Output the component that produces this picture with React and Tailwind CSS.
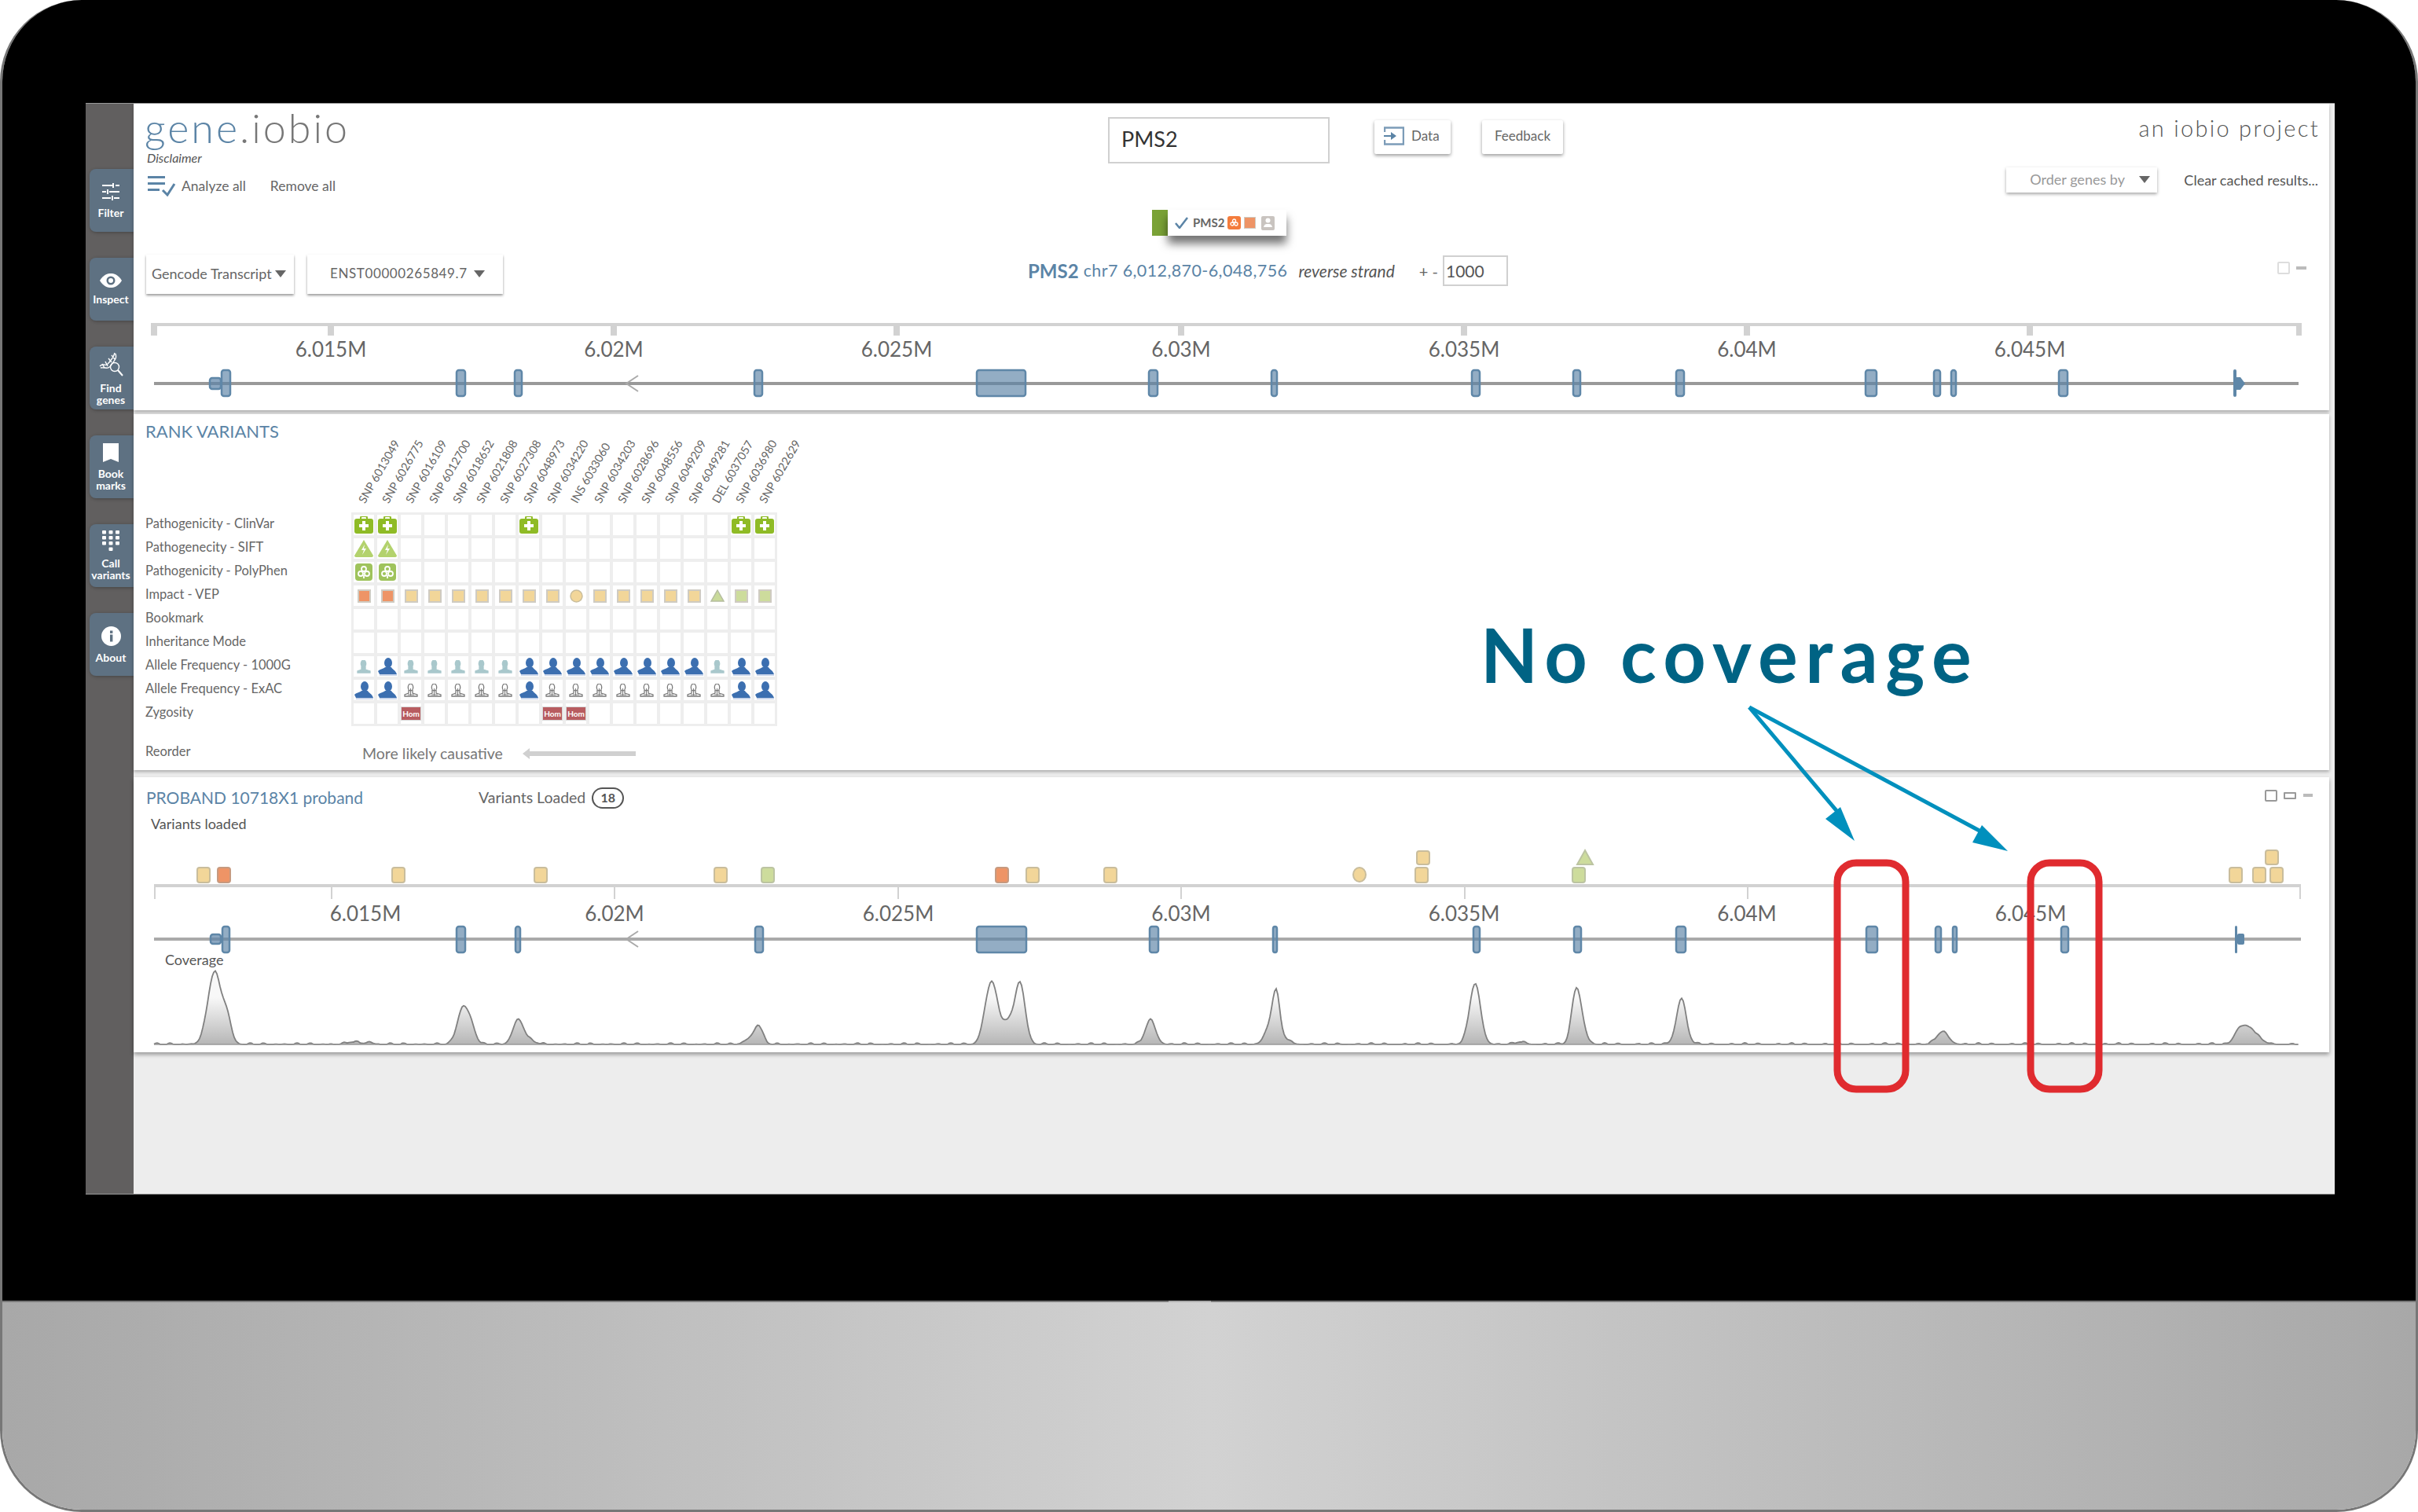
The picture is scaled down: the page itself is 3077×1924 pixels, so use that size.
import React from "react";

const FONT = { fontFamily: "Lato, 'Open Sans', sans-serif" };

const EXONS_TOP = [[281, 294], [580, 593], [654, 665], [959, 971], [1242, 1306], [1461, 1474], [1617, 1626], [1872, 1884], [2001, 2012], [2132, 2144], [2373, 2389], [2460, 2470], [2482, 2490], [2619, 2632]];
const EXONS_BOTTOM = [[282, 293], [580, 593], [655, 663], [960, 972], [1242, 1307], [1462, 1475], [1619, 1626], [1874, 1884], [2002, 2013], [2132, 2146], [2374, 2390], [2462, 2471], [2484, 2491], [2622, 2633]];
const TICKS = [[421, "6.015M"], [781, "6.02M"], [1141, "6.025M"], [1503, "6.03M"], [1863, "6.035M"], [2223, "6.04M"], [2583, "6.045M"]];
const BOTTOM_TICKS = [[422, "6.015M", 465], [782, "6.02M", 782], [1143, "6.025M", 1143], [1503, "6.03M", 1503], [1864, "6.035M", 1863], [2224, "6.04M", 2223], [2584, "6.045M", 2584]];

const COLS = ["SNP 6013049", "SNP 6026775", "SNP 6016109", "SNP 6012700", "SNP 6018652", "SNP 6021808", "SNP 6027308", "SNP 6048973", "SNP 6034220", "INS 6033060", "SNP 6034203", "SNP 6028696", "SNP 6048556", "SNP 6049209", "SNP 6049281", "DEL 6037057", "SNP 6036980", "SNP 6022629"];
const ROW_LABELS = ["Pathogenicity - ClinVar", "Pathogenecity - SIFT", "Pathogenicity - PolyPhen", "Impact - VEP", "Bookmark", "Inheritance Mode", "Allele Frequency - 1000G", "Allele Frequency - ExAC", "Zygosity"];

const PEAKS = [
  [273, 92, 8.5], [289, 30, 5.5], [589, 46, 7], [600, 18, 5.5], [659, 29, 6.5], [670, 6, 9], [965, 24, 5.5], [952, 6, 6],
  [450, 3, 8], [470, 3, 4], [1263, 70, 6.5], [1298, 77, 6.5], [1281, 28, 8], [1254, 24, 6], [1464, 31, 6.5],
  [1624, 50, 4.5], [1617, 24, 7], [1632, 8, 8], [1877, 77, 7], [1935, 3, 6], [2005, 58, 5.5], [2012, 25, 6],
  [2140, 50, 5.5], [2134, 10, 6], [2147, 5, 6], [2472, 16, 7.5], [2850, 20, 6.5], [2863, 18, 6.5], [2875, 6, 7],
];

function coveragePath() {
  const base = 1328;
  let d = "";
  for (let x = 196; x <= 2925; x += 2) {
    let h = Math.max(0, Math.sin(x * 0.37) * Math.sin(x * 0.053) * 2);
    for (const [c, a, s] of PEAKS) h += a * Math.exp(-((x - c) ** 2) / (2 * s * s));
    d += `${d ? "L" : "M"}${x} ${(base - h).toFixed(1)}`;
  }
  return d;
}
const COV = coveragePath();

function Caret({ className = "" }) {
  return (
    <svg width="14" height="9" viewBox="0 0 14 9" className={className}>
      <path d="M0 0H14L7 9Z" fill="#666" />
    </svg>
  );
}

function SideButton({ icon, lines }) {
  return (
    <div className="w-full h-[80px] pr-[2px] bg-[#5e7182] rounded-l-[8px] shadow-[1px_1px_4px_rgba(0,0,0,0.3)] flex flex-col items-center justify-center text-white text-[14px] font-bold leading-[15px] text-center">
      <div className="mb-[7px] flex items-center justify-center">{icon}</div>
      {lines.map((l) => (
        <div key={l}>{l}</div>
      ))}
    </div>
  );
}

function Sidebar() {
  const ic = { fill: "none", stroke: "white" };
  return (
    <div className="w-[61px] shrink-0 bg-[#615f5f] pl-[5px] pt-[83px] flex flex-col gap-[33px]">
      <SideButton
        lines={["Filter"]}
        icon={
          <svg width="24" height="24" viewBox="0 0 24 24" {...ic} strokeWidth="2">
            <path d="M1 4H14M18 4H23M15 1V7M1 12H6M10 12H23M8 9V15M1 20H12M16 20H23M14 17V23" />
          </svg>
        }
      />
      <SideButton
        lines={["Inspect"]}
        icon={
          <svg width="28" height="18" viewBox="0 0 28 18">
            <path d="M0 9C5 1 10 0 14 0S23 1 28 9C23 17 18 18 14 18S5 17 0 9Z" fill="white" />
            <circle cx="14" cy="9" r="5.5" fill="#5e7182" />
            <circle cx="14" cy="9" r="3" fill="white" />
          </svg>
        }
      />
      <SideButton
        lines={["Find", "genes"]}
        icon={
          <svg width="32" height="32" viewBox="0 0 32 32" {...ic} strokeWidth="1.4">
            <path d="M2 19C8 13 8 22 14 14S20 7 21 2M3 21C9 20 13 24 17 17S24 10 22 3M5 16L8 21M9 13L12 19M13 9L17 14M17 5L21 10" />
            <circle cx="21" cy="20" r="5.5" />
            <path d="M25 24L31 31" strokeWidth="2" />
          </svg>
        }
      />
      <SideButton
        lines={["Book", "marks"]}
        icon={
          <svg width="20" height="24" viewBox="0 0 20 24">
            <path d="M0 0H20V24L10 20L0 24Z" fill="white" />
          </svg>
        }
      />
      <SideButton
        lines={["Call", "variants"]}
        icon={
          <svg width="22" height="27" viewBox="0 0 22 27" fill="white">
            {[0, 1, 2].flatMap((r) => [0, 1, 2].map((c) => <rect key={`${r}${c}`} x={c * 8.5} y={r * 7} width="5" height="4.5" rx="1" />))}
            <rect x="8.5" y="21.5" width="5" height="4.5" rx="1" />
          </svg>
        }
      />
      <SideButton
        lines={["About"]}
        icon={
          <svg width="25" height="25" viewBox="0 0 25 25">
            <circle cx="12.5" cy="12.5" r="12.5" fill="white" />
            <rect x="11" y="10.5" width="3.4" height="9" fill="#5e7182" />
            <rect x="11" y="5.5" width="3.4" height="3.4" fill="#5e7182" />
          </svg>
        }
      />
    </div>
  );
}

function Exon({ a, b, y1, y2 }) {
  return <rect x={a + 1} y={y1 + 1} width={b - a - 2} height={y2 - y1 - 2} rx="3" fill="#5b82a6" fillOpacity="0.66" stroke="#5f87a8" strokeWidth="2.5" />;
}

function Shield({ children }) {
  return <div className="bg-white w-[26px] h-[26px] flex items-center justify-center overflow-visible">{children}</div>;
}

function ClinVar() {
  return (
    <svg width="24" height="22" viewBox="0 0 24 22">
      <path d="M8 4V2C8 1 9 0 10 0H14C15 0 16 1 16 2V4" fill="none" stroke="#8fbb26" strokeWidth="2" />
      <rect y="3" width="24" height="19" rx="3" fill="#8fbb26" />
      <path d="M10 7H14V11H18V15H14V19H10V15H6V11H10Z" fill="white" transform="translate(0 -1)" />
    </svg>
  );
}
function Sift() {
  return (
    <svg width="24" height="22" viewBox="0 0 24 22">
      <path d="M12 0L24 20C24 21 23 22 22 22H2C1 22 0 21 0 20Z" fill="#b3d26d" />
      <path d="M13 6L9 13H12L10 19L15 11H12Z" fill="white" />
    </svg>
  );
}
function Poly() {
  return (
    <svg width="22" height="22" viewBox="0 0 22 22">
      <rect width="22" height="22" rx="4" fill="#9fc35c" />
      <g fill="none" stroke="white" strokeWidth="1.8">
        <circle cx="11" cy="7" r="3" />
        <circle cx="7" cy="13" r="3" />
        <circle cx="15" cy="13" r="3" />
        <path d="M11 15V19" />
      </g>
    </svg>
  );
}
function Vep({ kind }) {
  if (kind === "circle")
    return (
      <svg width="17" height="17" viewBox="0 0 17 17">
        <ellipse cx="8.5" cy="8.5" rx="7.5" ry="7.5" fill="#f2d699" stroke="#c9bd9c" strokeWidth="1.5" />
      </svg>
    );
  if (kind === "tri")
    return (
      <svg width="18" height="16" viewBox="0 0 18 16">
        <path d="M9 1L17 15H1Z" fill="#c9da9a" stroke="#b5bda0" strokeWidth="1.5" />
      </svg>
    );
  const fill = kind === "o" ? "bg-[#ee9466]" : kind === "g" ? "bg-[#cddc9c]" : "bg-[#f2d699]";
  return <div className={`w-[17px] h-[17px] border-2 border-[#cfcbc2] ${fill}`} />;
}
function Person({ dark, hollow }) {
  if (dark)
    return (
      <svg width="24" height="23" viewBox="0 0 24 23">
        <ellipse cx="13" cy="6.5" rx="5" ry="6.5" fill="#3c6fb0" />
        <path d="M0 17C3 14 7 14 9 12H17C18 15 22 15 24 21H2Z" fill="#3c6fb0" />
        <path d="M2 21H24V23H2Z" fill="#c9d5ea" />
      </svg>
    );
  const col = hollow ? "#7a7a7a" : "#a9c8cc";
  return (
    <svg width="18" height="17" viewBox="0 0 18 17">
      <ellipse cx="8.5" cy="4.5" rx="3.2" ry="4.5" fill={hollow ? "none" : col} stroke={col} strokeWidth="1.3" />
      <path d="M6 8V12L1 14V16H17V14L11 12V8" fill={hollow ? "none" : col} stroke={col} strokeWidth="1.3" />
      {hollow && <path d="M8.5 6V15M5 14H13" fill="none" stroke={col} strokeWidth="1" />}
    </svg>
  );
}
function Hom() {
  return <div className="w-[26px] h-[18px] bg-[#b85c60] border border-[#d9d9d9] text-white text-[10px] font-bold leading-[16px] text-center">Hom</div>;
}

const LIGHT = [0, 2, 3, 4, 5, 6, 15];
const EXAC = [0, 1, 7, 16, 17];
const HOM = [2, 8, 9];
const CLIN = [0, 1, 7, 16, 17];

function cellContent(r, c) {
  if (r === 0) return CLIN.includes(c) ? <ClinVar /> : null;
  if (r === 1) return c < 2 ? <Sift /> : null;
  if (r === 2) return c < 2 ? <Poly /> : null;
  if (r === 3) {
    if (c < 2) return <Vep kind="o" />;
    if (c === 9) return <Vep kind="circle" />;
    if (c === 15) return <Vep kind="tri" />;
    if (c > 15) return <Vep kind="g" />;
    return <Vep kind="y" />;
  }
  if (r === 6) return LIGHT.includes(c) ? <Person /> : <Person dark />;
  if (r === 7) return EXAC.includes(c) ? <Person dark /> : <Person hollow />;
  if (r === 8) return HOM.includes(c) ? <Hom /> : null;
  return null;
}

function Header() {
  return (
    <div className="flex h-[190px]">
      <div className="w-[1240px] pl-[14px] shrink-0">
        <div className="text-[52px] leading-[54px] font-light tracking-[3px] pt-[3px] h-[58px]">
          <span className="text-[#5b84a6]">gene</span>
          <span className="text-[#777]">.iobio</span>
        </div>
        <div className="pl-[3px] text-[16px] italic text-[#555] leading-[20px] mt-[1px]">Disclaimer</div>
        <div className="flex items-center mt-[13px] pl-[4px] text-[17.5px] text-[#666]">
          <svg width="36" height="26" viewBox="0 0 36 26" className="mr-[7px]">
            <path d="M0 1.5H22M0 9.5H22M0 17.5H15" stroke="#5b84a6" strokeWidth="3" />
            <path d="M19 18L25 24L34 10" fill="none" stroke="#5b84a6" strokeWidth="3" />
          </svg>
          <span>Analyze all</span>
          <span className="ml-[31px]">Remove all</span>
        </div>
      </div>
      <div className="w-[1090px] shrink-0 pt-[17px]">
        <div className="flex items-start">
          <div className="w-[282px] h-[59px] border-2 border-[#d0d0d0] pl-[15px] text-[27px] leading-[52px] text-[#333]">PMS2</div>
          <div className="ml-[57px] mt-[4px] w-[97px] h-[43px] pb-[3px] bg-white rounded-[2px] shadow-[0_2px_4px_rgba(0,0,0,0.4)] flex items-center pl-[12px] text-[17px] text-[#666]">
            <svg width="26" height="24" viewBox="0 0 26 24" className="mr-[9px]">
              <path d="M1 7V1.5H25V22.5H1V17" fill="none" stroke="#7c9cb8" strokeWidth="2.5" />
              <path d="M0 11H9V7L16 12L9 17V13H0Z" fill="#5b84a6" />
            </svg>
            Data
          </div>
          <div className="ml-[40px] mt-[4px] w-[103px] h-[43px] pb-[3px] bg-white rounded-[2px] shadow-[0_2px_4px_rgba(0,0,0,0.4)] flex items-center justify-center text-[17px] text-[#666]">Feedback</div>
        </div>
        <div className="ml-[56px] mt-[59px] flex h-[33px] w-[171px]">
          <div className="w-[20px] bg-[#7aa236]" />
          <div className="w-[151px] bg-white shadow-[0_10px_12px_rgba(0,0,0,0.55)] flex items-center pl-[9px] text-[15px] font-bold text-[#666]">
            <svg width="17" height="15" viewBox="0 0 17 15" className="mr-[6px]">
              <path d="M1 8L6 14L16 1" fill="none" stroke="#5b84a6" strokeWidth="2.5" />
            </svg>
            PMS2
            <div className="ml-[4px] w-[17px] h-[17px] rounded-[3px] bg-[#f47c3c] flex items-center justify-center">
              <svg width="11" height="11" viewBox="0 0 11 11" fill="none" stroke="white" strokeWidth="1.3">
                <circle cx="5.5" cy="3" r="2" />
                <circle cx="3" cy="7" r="2" />
                <circle cx="8" cy="7" r="2" />
              </svg>
            </div>
            <div className="ml-[4px] w-[15px] h-[15px] bg-[#ee9466] border border-[#cfcbc2]" />
            <div className="ml-[7px] w-[17px] h-[18px] rounded-[2px] bg-[#c9c4c0] flex items-center justify-center">
              <svg width="11" height="13" viewBox="0 0 11 13" fill="white">
                <circle cx="5.5" cy="3.5" r="3" />
                <path d="M0 12C1 8 3 8 5.5 8S10 8 11 12Z" />
              </svg>
            </div>
          </div>
        </div>
      </div>
      <div className="flex-1 flex flex-col items-end pr-[12px] pt-[14px]">
        <div className="text-[29px] leading-[34px] font-light tracking-[2.3px] text-[#555]">an iobio project</div>
        <div className="flex items-center mt-[33px]">
          <div className="w-[192px] h-[32px] pb-[2px] bg-white shadow-[0_2px_4px_rgba(0,0,0,0.35)] flex items-center pl-[30px] text-[18px] text-[#999]">
            Order genes by
            <Caret className="ml-[18px]" />
          </div>
          <div className="ml-[34px] mr-[2px] text-[18px] text-[#555]">Clear cached results...</div>
        </div>
      </div>
    </div>
  );
}

function TitleRow() {
  return (
    <div className="flex items-center h-[54px]">
      <div className="ml-[16px] w-[188px] h-[50px] pb-[2px] bg-white shadow-[0_2px_3px_rgba(0,0,0,0.4)] flex items-center pl-[7px] text-[18px] text-[#666]">
        Gencode Transcript
        <Caret className="ml-[4px]" />
      </div>
      <div className="ml-[17px] w-[249px] h-[50px] pb-[2px] bg-white shadow-[0_2px_3px_rgba(0,0,0,0.4)] flex items-center pl-[29px] text-[17px] tracking-[0.6px] text-[#666]">
        ENST00000265849.7
        <Caret className="ml-[8px]" />
      </div>
      <div className="ml-[668px] flex items-center -mt-[9px]">
        <span className="text-[24px] font-bold text-[#5b84a6]">PMS2</span>
        <span className="ml-[6px] text-[21.5px] text-[#5b84a6] tracking-[0.4px]">chr7 6,012,870-6,048,756</span>
        <span className="ml-[14px] text-[21px] italic text-[#555]">reverse strand</span>
        <span className="ml-[31px] text-[20px] text-[#666]">+ -</span>
        <div className="ml-[6px] w-[83px] h-[39px] border-2 border-[#d0d0d0] pl-[2px] text-[21px] leading-[35px] text-[#555]">1000</div>
      </div>
      <div className="ml-auto mr-[29px] flex items-center -mt-[16px]">
        <div className="w-[16px] h-[16px] border-2 border-[#ddd] rounded-[2px]" />
        <div className="ml-[8px] w-[13px] h-[4px] bg-[#bbb]" />
      </div>
    </div>
  );
}

function TopTrack() {
  return (
    <svg width="2794" height="115" viewBox="170 405 2794 115" className="block mt-[31px]">
      <g fill="#d2d2d2">
        <rect x="192" y="409" width="2736" height="4" />
        <rect x="192" y="409" width="8" height="16" />
        <rect x="2922" y="409" width="7" height="16" />
        {TICKS.map(([x]) => (
          <rect key={x} x={x - 4} y="409" width="8" height="16" />
        ))}
      </g>
      {TICKS.map(([x, t]) => (
        <text key={t} x={x} y="452" textAnchor="middle" fontSize="26" fill="#666">
          {t}
        </text>
      ))}
      <path d="M196 486H2925" stroke="#999" strokeWidth="4" />
      <path d="M812 476L797 486L812 496" fill="none" stroke="#aaa" strokeWidth="2" />
      <rect x="267" y="479" width="14" height="14" rx="3" fill="#5b82a6" fillOpacity="0.7" stroke="#5f87a8" strokeWidth="2.5" />
      {EXONS_TOP.map(([a, b]) => (
        <Exon key={a} a={a} b={b} y1={468} y2={503} />
      ))}
      <rect x="2842" y="468" width="4" height="35" rx="2" fill="#5f87a8" />
      <path d="M2846 478H2851L2857 486L2851 494H2846Z" fill="#5f87a8" />
    </svg>
  );
}

function RankPanel() {
  return (
    <div className="mt-[5px] h-[453px] bg-white mr-[7px] shadow-[0_2px_4px_rgba(0,0,0,0.3)] pl-[15px] relative">
      <div className="pt-[8px] h-[40px] text-[22px] leading-[28px] text-[#5b84a6]">RANK VARIANTS</div>
      <div className="flex h-[85px] ml-[263px]">
        {COLS.map((c) => (
          <div key={c} className="relative w-[30px] h-full shrink-0">
            <div className="absolute left-[19px] bottom-[9px] origin-bottom-left rotate-[-60deg] whitespace-nowrap text-[14.5px] leading-[16px] text-[#666]">{c}</div>
          </div>
        ))}
      </div>
      <div className="flex pl-[2px]">
        <div className="w-[260px] shrink-0 -mt-[1px] -ml-[2px] mr-[2px]">
          {ROW_LABELS.map((l) => (
            <div key={l} className="h-[30px] flex items-center text-[16.5px] text-[#666]">
              {l}
            </div>
          ))}
        </div>
        <div className="grid grid-cols-[repeat(18,30px)] grid-rows-[repeat(9,30px)] bg-[#eeeeee] p-[1px] w-[542px] h-[272px]">
          {ROW_LABELS.flatMap((_, r) =>
            COLS.map((_, c) => (
              <div key={`${r}-${c}`} className="w-[30px] h-[30px] flex items-center justify-center p-[2px]">
                <Shield>{cellContent(r, c)}</Shield>
              </div>
            ))
          )}
        </div>
      </div>
      <div className="flex items-center mt-[22px] h-[26px]">
        <div className="w-[276px] text-[16.5px] text-[#666] -mt-[5px]">Reorder</div>
        <div className="text-[19.5px] text-[#777]">More likely causative</div>
        <svg width="144" height="16" viewBox="0 0 144 16" className="ml-[25px]">
          <path d="M0 8L9 1V5H144V11H9V15Z" fill="#d0d0d0" />
        </svg>
      </div>
    </div>
  );
}

function ProbandPanel() {
  const y1 = 1103;
  const Sq = ({ x, y = y1, h = 19, fill = "#f2d699", stroke = "#c9bd9c" }) => <rect x={x - 8} y={y} width="16" height={h} rx="3" fill={fill} stroke={stroke} strokeWidth="2" />;
  return (
    <div className="mt-[9px] h-[350px] bg-white mr-[7px] shadow-[0_3px_5px_rgba(0,0,0,0.35)] relative">
      <div className="flex items-center pl-[16px] pt-[10px] h-[42px]">
        <div className="w-[423px] text-[21px] text-[#5b84a6]">PROBAND 10718X1 proband</div>
        <div className="text-[19.5px] text-[#666]">Variants Loaded</div>
        <div className="ml-[8px] w-[41px] h-[27px] border-2 border-[#555] rounded-[14px] flex items-center justify-center text-[16px] font-bold text-[#555]">18</div>
        <div className="ml-auto mr-[21px] flex items-center -mt-[6px]">
          <div className="w-[16px] h-[15px] border-2 border-[#999] rounded-[2px]" />
          <div className="ml-[8px] w-[16px] h-[9px] border-2 border-[#999] rounded-[1px]" />
          <div className="ml-[9px] w-[12px] h-[4px] bg-[#bbb]" />
        </div>
      </div>
      <div className="pl-[22px] pt-[7px] h-[45px] text-[18px] leading-[20px] text-[#555]">Variants loaded</div>
      <svg width="2794" height="263" viewBox="170 1075 2794 263" className="block">
        <defs>
          <linearGradient id="cov" gradientUnits="userSpaceOnUse" x1="0" y1="1268" x2="0" y2="1328">
            <stop offset="0" stopColor="#f8f8f8" />
            <stop offset="1" stopColor="#b6b6b6" />
          </linearGradient>
        </defs>
        {[259, 507, 688, 917, 1314, 1413, 1809, 2845, 2875, 2897].map((x) => (
          <Sq key={x} x={x} />
        ))}
        <Sq x={285} fill="#ee9466" stroke="#c69a80" />
        <Sq x={1275} fill="#ee9466" stroke="#c69a80" />
        <Sq x={977} fill="#cddc9c" stroke="#bcc4a2" />
        <Sq x={2009} fill="#cddc9c" stroke="#bcc4a2" />
        <Sq x={1811} y={1082} h={17} />
        <Sq x={2891} y={1081} h={18} />
        <ellipse cx="1730" cy="1112" rx="8" ry="9" fill="#f2d699" stroke="#c9bd9c" strokeWidth="2" />
        <path d="M2017 1081L2027 1099H2007Z" fill="#cddc9c" stroke="#bcc4a2" strokeWidth="2" />
        <g fill="#d2d2d2">
          <rect x="196" y="1124" width="2732" height="4" />
          <rect x="196" y="1124" width="2" height="19" />
          <rect x="2926" y="1124" width="2" height="19" />
          {BOTTOM_TICKS.map(([x]) => (
            <rect key={x} x={x - 1} y="1124" width="2" height="19" />
          ))}
        </g>
        {BOTTOM_TICKS.map(([x, t, c]) => (
          <text key={t} x={c} y="1171" textAnchor="middle" fontSize="26" fill="#666">
            {t}
          </text>
        ))}
        <path d="M196 1194H2928" stroke="#aaa" strokeWidth="4" />
        <path d="M812 1184L797 1194L812 1204" fill="none" stroke="#aaa" strokeWidth="2" />
        <rect x="268" y="1188" width="13" height="12" rx="3" fill="#5b82a6" fillOpacity="0.7" stroke="#5f87a8" strokeWidth="2.5" />
        {EXONS_BOTTOM.map(([a, b]) => (
          <Exon key={a} a={a} b={b} y1={1177} y2={1212} />
        ))}
        <rect x="2844" y="1177" width="3" height="35" rx="1.5" fill="#5f87a8" />
        <rect x="2847" y="1187" width="9" height="14" rx="2" fill="#5f87a8" />
        <text x="210" y="1227" fontSize="18" fill="#555">
          Coverage
        </text>
        <path d={`${COV}L2925 1328L196 1328Z`} fill="url(#cov)" />
        <path d={COV} fill="none" stroke="#808080" strokeWidth="1.8" />
        <path d="M196 1328H2925" stroke="#999" strokeWidth="1.5" />
      </svg>
    </div>
  );
}

function Annotations() {
  return (
    <>
      <svg width="3077" height="1924" viewBox="0 0 3077 1924" className="absolute inset-0 pointer-events-none">
        <rect x="2338" y="1098" width="87" height="288" rx="24" fill="none" stroke="#e02b2f" strokeWidth="9" />
        <rect x="2584" y="1098" width="87" height="288" rx="24" fill="none" stroke="#e02b2f" strokeWidth="9" />
        <line x1="2226" y1="900" x2="2345" y2="1041" stroke="#0090bd" strokeWidth="5" />
        <polygon points="2360,1070 2323,1042 2342,1027" fill="#0090bd" />
        <line x1="2226" y1="900" x2="2530" y2="1063" stroke="#0090bd" strokeWidth="5" />
        <polygon points="2555,1083 2510,1072 2522,1050" fill="#0090bd" />
      </svg>
      <div className="absolute left-[1884px] top-[772px] text-[95px] leading-[120px] font-bold tracking-[9.5px] text-[#006384] whitespace-nowrap">No coverage</div>
    </>
  );
}

export default function App() {
  return (
    <div className="relative w-[3077px] h-[1924px] bg-white overflow-hidden" style={FONT}>
      <div className="h-full flex flex-col rounded-[104px] border-x-[3px] border-b-[3px] border-[#777] overflow-hidden">
        <div className="h-[1655px] bg-black pt-[131px] pl-[106px]">
          <div className="flex w-[2862px] h-[1389px] border-y border-[#999]">
            <Sidebar />
            <div className="flex-1 bg-[#ededed]">
              <div className="h-[390px] bg-white mr-[7px] shadow-[0_3px_4px_rgba(0,0,0,0.25)] overflow-hidden">
                <Header />
                <TitleRow />
                <TopTrack />
              </div>
              <RankPanel />
              <ProbandPanel />
            </div>
          </div>
        </div>
        <div className="relative flex-1 border-t-2 border-[#777] bg-[linear-gradient(90deg,#a8a8a8_0%,#d2d2d2_50%,#a8a8a8_100%)]">
          <div className="absolute left-[1484px] -top-[2px] w-[54px] h-[2px] bg-[#aaa]" />
        </div>
      </div>
      <Annotations />
    </div>
  );
}
